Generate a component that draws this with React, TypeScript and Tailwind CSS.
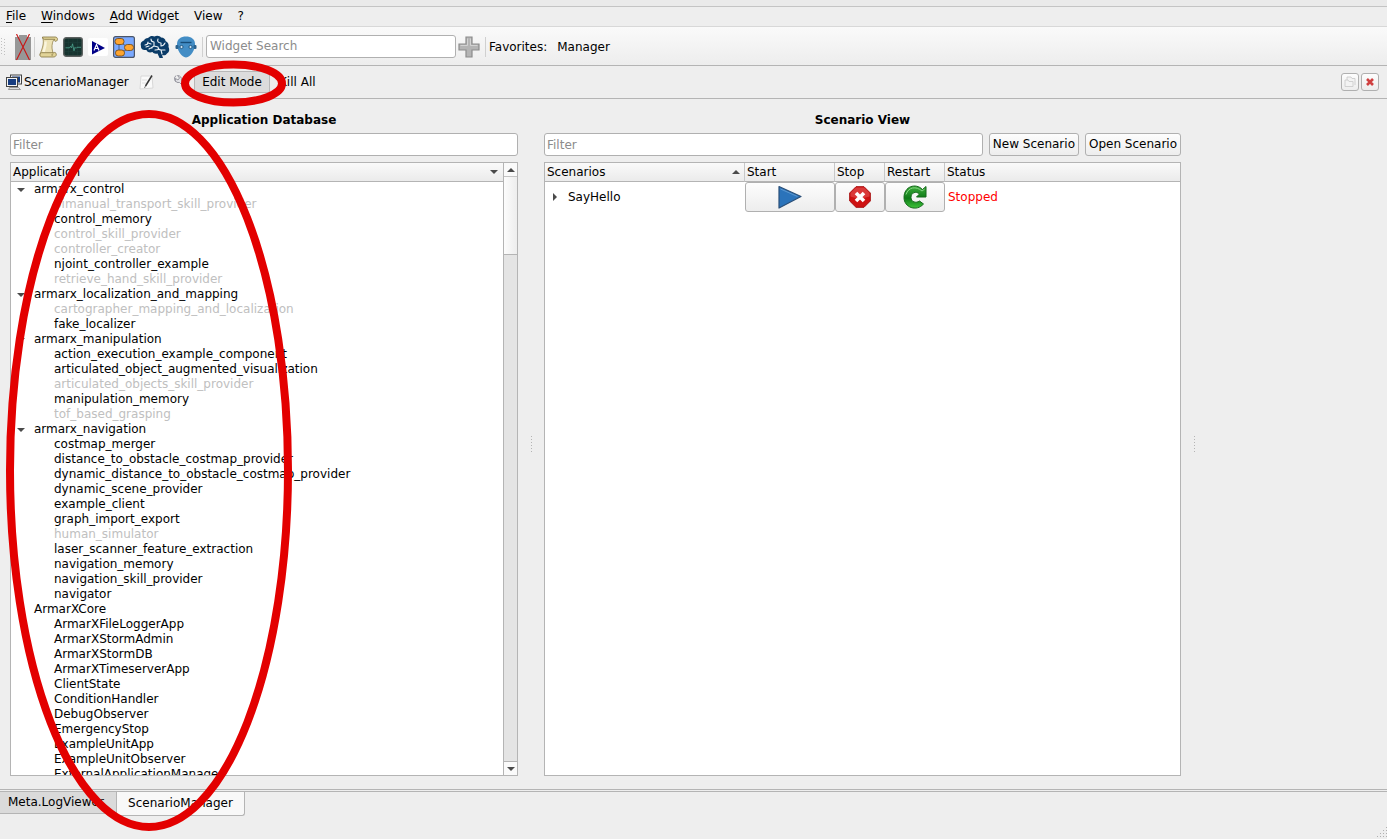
import type { ReactNode } from 'react';

type AppItem = { name: string; disabled?: boolean };
type AppPackage = { name: string; items: AppItem[] };

const packages: AppPackage[] = [
  {
    name: 'armarx_control',
    items: [
      { name: 'bimanual_transport_skill_provider', disabled: true },
      { name: 'control_memory' },
      { name: 'control_skill_provider', disabled: true },
      { name: 'controller_creator', disabled: true },
      { name: 'njoint_controller_example' },
      { name: 'retrieve_hand_skill_provider', disabled: true },
    ],
  },
  {
    name: 'armarx_localization_and_mapping',
    items: [
      { name: 'cartographer_mapping_and_localization', disabled: true },
      { name: 'fake_localizer' },
    ],
  },
  {
    name: 'armarx_manipulation',
    items: [
      { name: 'action_execution_example_component' },
      { name: 'articulated_object_augmented_visualization' },
      { name: 'articulated_objects_skill_provider', disabled: true },
      { name: 'manipulation_memory' },
      { name: 'tof_based_grasping', disabled: true },
    ],
  },
  {
    name: 'armarx_navigation',
    items: [
      { name: 'costmap_merger' },
      { name: 'distance_to_obstacle_costmap_provider' },
      { name: 'dynamic_distance_to_obstacle_costmap_provider' },
      { name: 'dynamic_scene_provider' },
      { name: 'example_client' },
      { name: 'graph_import_export' },
      { name: 'human_simulator', disabled: true },
      { name: 'laser_scanner_feature_extraction' },
      { name: 'navigation_memory' },
      { name: 'navigation_skill_provider' },
      { name: 'navigator' },
    ],
  },
  {
    name: 'ArmarXCore',
    items: [
      { name: 'ArmarXFileLoggerApp' },
      { name: 'ArmarXStormAdmin' },
      { name: 'ArmarXStormDB' },
      { name: 'ArmarXTimeserverApp' },
      { name: 'ClientState' },
      { name: 'ConditionHandler' },
      { name: 'DebugObserver' },
      { name: 'EmergencyStop' },
      { name: 'ExampleUnitApp' },
      { name: 'ExampleUnitObserver' },
      { name: 'ExternalApplicationManager' },
    ],
  },
];

function Arrow({ dir }: { dir: 'up' | 'down' | 'right' }) {
  const points = { up: '0,6 4,2 8,6', down: '0,2 8,2 4,6', right: '2,0 6,4 2,8' };
  return (
    <svg width="8" height="8" viewBox="0 0 8 8" className="shrink-0">
      <polygon points={points[dir]} fill="#4a4a4a" />
    </svg>
  );
}

function Separator() {
  return <span className="w-px h-5 bg-[#d0d0d0] shrink-0" />;
}

// dotted grip between the panes
function SplitHandle() {
  return (
    <div className="flex items-center justify-center">
      <svg width="2" height="18" viewBox="0 0 2 18">
        {[0, 3, 6, 9, 12, 15].map((y) => (
          <rect key={y} x="1" y={y} width="1" height="1" fill="#b4b4b4" />
        ))}
      </svg>
    </div>
  );
}

function ToolButton({ label, className, children }: { label: string; className: string; children: ReactNode }) {
  return (
    <button aria-label={label} className={`flex items-center justify-center shrink-0 ${className}`}>
      {children}
    </button>
  );
}

function DisconnectIcon() {
  return (
    <svg width="16" height="27" viewBox="0 0 16 27">
      <path d="M0 3h4V1h8v2h4v23H0z" fill="#979797" />
      <path d="M1.500 0L14.500 26M14.500 0L1.500 26" stroke="#c81414" strokeWidth="1.100" />
    </svg>
  );
}

function ScrollIcon() {
  return (
    <svg width="20" height="22" viewBox="0 0 20 22">
      <path d="M3.500 1.500C5.500 6 3.500 12 1.500 17c-1 2 0 3.500 1.500 3.500h12L13.500 15c-1-4-.5-7.500.8-10.500L17 2z" fill="#ece1b4" stroke="#94844e" strokeWidth=".8" />
      <path d="M6.500 5.500C7 9 5.500 13 4.500 16" fill="none" stroke="#faf5dd" strokeWidth="2.400" />
      <path d="M3.500 1h12.500c3-.2 3.300 3.800.8 4.300-1.500.2-2-1.300-1-2H5.500C4.500 3.300 3.500 2.500 3.500 1z" fill="#e2d498" stroke="#80713e" strokeWidth=".8" />
      <path d="M2.500 16.700h12c1-.7 2.800 0 2.800 1.600 0 2-1.500 2.700-3 2.700H2.500c-2-.3-2-4 0-4.300z" fill="#e2d498" stroke="#80713e" strokeWidth=".8" />
      <path d="M13.500 20c-1-.8-.5-2.300.8-2.200" fill="none" stroke="#80713e" strokeWidth=".8" />
    </svg>
  );
}

function MonitorIcon() {
  return (
    <svg width="20" height="20" viewBox="0 0 20 20">
      <rect x=".7" y=".7" width="18.600" height="18.600" rx="2.500" fill="#16332f" stroke="#5b605f" strokeWidth="1.400" />
      <path d="M2 5.500h16M2 10h16M2 14.500h16M5.500 2v16M10 2v16M14.500 2v16" stroke="#1f3f3a" strokeWidth=".6" />
      <path d="M2.500 10.800h4l1-1.500 1 1.500 1-4 1.500 7 1-3.500 1 1 1-1h4" fill="none" stroke="#4da38e" strokeWidth=".8" />
    </svg>
  );
}

function PlayAIcon() {
  return (
    <svg width="20" height="18" viewBox="0 0 20 18">
      <rect width="20" height="18" rx="2" fill="#fff" />
      <path d="M4 3l13 7L4 16.500z" fill="#000087" />
      <path d="M6 12.500l2.500-6 2.500 6M7 10.500h3" fill="none" stroke="#fff" strokeWidth="1.200" />
    </svg>
  );
}

function GraphIcon() {
  return (
    <svg width="22" height="22" viewBox="0 0 22 22">
      <rect x=".6" y=".6" width="20.800" height="20.800" rx="2" fill="#7aa9ff" stroke="#4b5568" strokeWidth="1.200" />
      <path d="M6 6v10M7 6l9 6M7 17l8-4" stroke="#47608f" strokeWidth="1" />
      <g fill="#ffa52e" stroke="#704d22" strokeWidth=".9">
        <rect x="2" y="2.500" width="9" height="6" rx="2.800" />
        <rect x="11.500" y="8.500" width="9" height="6" rx="2.800" />
        <rect x="2.500" y="14" width="9" height="6" rx="2.800" />
      </g>
    </svg>
  );
}

function BrainIcon() {
  return (
    <svg width="30" height="24" viewBox="0 0 30 24">
      <path d="M8 3C10 .5 13 .5 14.500 1.500 17 0 20 1 21 2.500c3 0 4.500 2 4.500 3.500 3 1.500 3.500 4 3 6 1.500 3 .5 5.500-1.500 6.500-1 2-3.500 2-5 1.500L23 23h-3.500l-2-4.500c-2.500.5-4 0-5-1.500-3 1-5.500 0-6-2C3 15.500.5 13.500 1 11 0 8 2 6 4 5.500 4.500 4 6 3 8 3z" fill="#0b3c68" />
      <path d="M5 10c2 0 3-1 3-3M8 8l3 1M11 4c0 2 1 3 3 3M14 7v4l-3 2M14 11l4 1M18 4c-1 2 0 4 3 4M21 8v3M25 8c-1 2-2 3-4 3M18 12c0 2 1 3 3 3h4M21 15l1 4M6 12l3-1M9 14c1-1 2-1 3-1M15 15c2 0 3 0 4-1" fill="none" stroke="#edf3f7" strokeWidth="1.100" strokeLinecap="round" />
    </svg>
  );
}

function HeadIcon() {
  return (
    <svg width="22" height="22" viewBox="0 0 22 22">
      <path d="M2 8C2 3 6 .5 11 .5S20 3 20 8c0 6-4 13-9 13.500C6 21 2 14 2 8z" fill="#438dc5" />
      <path d="M5.500 6.500h11" stroke="#174c77" strokeWidth="1.400" />
      <rect x=".5" y="9" width="3" height="4" rx="1" fill="#2b628e" />
      <rect x="18.500" y="9" width="3" height="4" rx="1" fill="#2b628e" />
      <circle cx="6.500" cy="11" r="1.600" fill="#d5e6f3" stroke="#1c527d" strokeWidth=".9" />
      <circle cx="15.500" cy="11" r="1.600" fill="#d5e6f3" stroke="#1c527d" strokeWidth=".9" />
    </svg>
  );
}

function PlusIcon() {
  return (
    <svg width="22" height="22" viewBox="0 0 22 22">
      <path d="M8 1h6v7h7v6h-7v7H8v-7H1V8h7z" fill="#b4b4b4" stroke="#8c8c8c" strokeWidth="1.200" />
      <path d="M9.500 2.500v7h-7M12.500 2.500v7h7" fill="none" stroke="#d2d2d2" strokeWidth="1" />
    </svg>
  );
}

function WindowsIcon() {
  return (
    <svg width="16" height="16" viewBox="0 0 16 16">
      <rect x="4.500" y="1" width="11" height="9" fill="#f4f4f4" stroke="#444" />
      <rect x="6" y="2.500" width="8" height="6" fill="#173d80" />
      <rect x=".5" y="3.500" width="11" height="9" fill="#f4f4f4" stroke="#444" />
      <rect x="2" y="5" width="8" height="6" fill="#173d80" />
      <path d="M2.500 15.500l1-2h9l2 2z" fill="#ddd" stroke="#777" strokeWidth=".7" />
    </svg>
  );
}

function EditPageIcon() {
  return (
    <svg width="16" height="16" viewBox="0 0 16 16">
      <path d="M2 2h11l1 12-13 1z" fill="#fafafa" stroke="#d0d0d0" strokeWidth=".8" />
      <path d="M3 6h5M3 9h4" stroke="#d8d8d8" strokeWidth=".8" />
      <path d="M13 1.500L6.500 12" stroke="#353535" strokeWidth="1.500" />
      <path d="M6.500 12l-1 2" stroke="#777" />
    </svg>
  );
}

function WrenchIcon() {
  return (
    <svg width="16" height="16" viewBox="0 0 16 16">
      <path d="M3 1.500a4 4 0 0 0 3.500 7L13 15l2-2-6.500-6.500a4 4 0 0 0-4-5L6.500 4 5 6 2.500 4.500A4 4 0 0 0 3 8" fill="#e2e2e6" stroke="#8d8d96" strokeWidth=".9" />
    </svg>
  );
}

function StartIcon() {
  return (
    <svg width="24" height="24" viewBox="0 0 24 24">
      <path d="M1 1.500l22 10-22 11.500z" fill="#2b73ba" stroke="#2a4f78" strokeWidth="1.200" strokeLinejoin="round" />
      <path d="M2.500 4l17 7.500" stroke="#5a97d0" strokeWidth="1" />
    </svg>
  );
}

function StopIcon() {
  return (
    <svg width="22" height="22" viewBox="0 0 22 22">
      <path d="M7 .7h8L21.300 7v8L15 21.300H7L.7 15V7z" fill="#ce1212" stroke="#a80f0f" strokeWidth="1" />
      <path d="M7 1.500h8L20.500 7v3.500C14 12.500 8 12.500 1.500 10.500V7z" fill="#e04a4a" opacity=".7" />
      <path d="M7 7l8 8M15 7l-8 8" stroke="#fff" strokeWidth="3.600" />
    </svg>
  );
}

function RestartIcon() {
  return (
    <svg width="24" height="24" viewBox="0 0 24 24">
      <defs>
        <linearGradient id="restart" x1="0" y1="0" x2="0" y2="1">
          <stop offset="0" stopColor="#3fae3c" />
          <stop offset=".55" stopColor="#0d7a17" />
          <stop offset="1" stopColor="#3fc43a" />
        </linearGradient>
      </defs>
      <path d="M19.500 4.500L23 1.500v10.500h-9.500l3-3C13 5.800 8 7.500 8 12.500c0 4.500 5 6 8.500 3.500l4 3C13.500 27 1 22.500 1 12.500 1 1.500 12.500-2.500 19.500 4.500z" fill="url(#restart)" stroke="#14681a" strokeWidth="1" strokeLinejoin="round" />
      <path d="M3 9.500C5.500 2 13 .8 19 6l2.500-1.800" fill="none" stroke="#86d584" strokeWidth="1" />
    </svg>
  );
}

const boxClass = 'rounded-[3px] border border-[#b0b0b0]';
const buttonClass = 'rounded-[3px] border border-[#b0b0b0] bg-gradient-to-b from-[#fdfdfd] to-[#ededed]';
const headClass = 'border-b border-[#b4b4b4] bg-gradient-to-b from-[#fafafa] to-[#ebebeb]';

function MenuBar() {
  return (
    <nav className="flex items-center gap-[15px] h-5 px-[6px] border-b border-[#d8d8d8]">
      <button><u className="underline-offset-2">F</u>ile</button>
      <button><u className="underline-offset-2">W</u>indows</button>
      <button><u className="underline-offset-2">A</u>dd Widget</button>
      <button>View</button>
      <button>?</button>
    </nav>
  );
}

function ToolBar() {
  return (
    <div className="flex items-center h-[39px] border-b border-[#b4b4b4] bg-gradient-to-b from-[#fafafa] to-[#ededed] pt-[2px]">
      <svg width="6" height="18" viewBox="0 0 6 18" className="mr-[6px]">
        {[0, 3, 6, 9, 12, 15].map((y) => (
          <path key={y} d={`M1 ${y}h1v1H1zM4 ${y + 1}h1v1H4z`} fill="#c0c0c0" />
        ))}
      </svg>
      <ToolButton label="Disconnect" className="w-[22px]"><DisconnectIcon /></ToolButton>
      <Separator />
      <ToolButton label="Log" className="w-7"><ScrollIcon /></ToolButton>
      <ToolButton label="System state" className="w-5"><MonitorIcon /></ToolButton>
      <ToolButton label="ArmarX" className="w-[30px]"><PlayAIcon /></ToolButton>
      <ToolButton label="Statecharts" className="w-[22px]"><GraphIcon /></ToolButton>
      <ToolButton label="Memory" className="w-10"><BrainIcon /></ToolButton>
      <ToolButton label="Robot" className="w-[22px] mr-[5px]"><HeadIcon /></ToolButton>
      <Separator />
      <input
        aria-label="Widget Search"
        placeholder="Widget Search"
        className={`${boxClass} bg-white h-[23px] w-[250px] px-[3px] ml-[3px] mb-[2px] placeholder:text-[#8c8c8c]`}
      />
      <ToolButton label="Add widget" className="w-[22px] mx-[2px]"><PlusIcon /></ToolButton>
      <span className="w-[3px]" />
      <Separator />
      <span className="pl-[3px] pr-[10px]">Favorites:</span>
      <button>Manager</button>
    </div>
  );
}

function TitleBar() {
  return (
    <div className="flex items-center h-[33px] border-b border-[#b4b4b4] pl-[6px] pr-2">
      <WindowsIcon />
      <span className="pl-[2px] w-[117px]">ScenarioManager</span>
      <ToolButton label="Edit scenario" className="w-4 mr-[18px]"><EditPageIcon /></ToolButton>
      <ToolButton label="Configure" className="w-4 mr-[5px]"><WrenchIcon /></ToolButton>
      <button className="h-[22px] w-[76px] rounded-[2px] border border-[#b8b8b8] bg-[#dcdcdc]">Edit Mode</button>
      <button className="ml-[9px]">Kill All</button>
      <div className="flex gap-[2px] ml-auto">
        <ToolButton label="Undock" className={`${buttonClass} size-[18px]`}>
          <svg width="12" height="12" viewBox="0 0 12 12" fill="#f3f3f3" stroke="#cdcdcd" strokeWidth=".9">
            <path d="M3 5V1h4l1 1.500h3V9" />
            <path d="M1 10.500V4h3l1 1.500h4v5z" />
          </svg>
        </ToolButton>
        <ToolButton label="Close" className={`${buttonClass} size-[18px]`}>
          <svg width="8" height="8" viewBox="0 0 8 8">
            <path d="M1 1l6 6M7 1L1 7" stroke="#d04040" strokeWidth="2.600" />
          </svg>
        </ToolButton>
      </div>
    </div>
  );
}

function ApplicationTree() {
  return (
    <div className="flex flex-1 min-h-0 border border-[#b4b4b4] bg-white">
      <div className="flex flex-col flex-1 min-w-0">
        <button className={`${headClass} flex items-center justify-between h-[19px] shrink-0 pl-[2px] pr-[5px]`}>
          Application
          <Arrow dir="down" />
        </button>
        <ul className="flex-1 min-h-0 overflow-x-hidden overflow-y-auto [scrollbar-width:none] whitespace-nowrap">
          {packages.map((pkg) => (
            <li key={pkg.name}>
              <div className="flex items-center gap-[9px] pl-[6px]">
                <Arrow dir="down" />
                {pkg.name}
              </div>
              <ul className="pl-[43px]">
                {pkg.items.map((item) => (
                  <li key={item.name} className={item.disabled ? 'text-[#c0c0c0]' : undefined}>
                    {item.name}
                  </li>
                ))}
              </ul>
            </li>
          ))}
        </ul>
      </div>
      <div className="flex flex-col w-[14px] shrink-0 border-l border-[#b4b4b4] bg-[#e4e4e4]">
        <button aria-label="Scroll up" className="flex items-center justify-center h-[14px] border-b border-[#c4c4c4] bg-[#fafafa]">
          <Arrow dir="up" />
        </button>
        <div className="h-[78px] border-b border-[#b4b4b4] bg-gradient-to-r from-[#fcfcfc] to-[#ededed]" />
        <button aria-label="Scroll down" className="flex items-center justify-center h-[14px] mt-auto border-t border-[#b4b4b4] bg-[#fafafa]">
          <Arrow dir="down" />
        </button>
      </div>
    </div>
  );
}

function ScenarioTable() {
  return (
    <div className="flex-1 min-h-0 border border-[#b4b4b4] bg-white overflow-hidden">
      <table className="w-full table-fixed border-separate border-spacing-0">
        <colgroup>
          <col className="w-[200px]" />
          <col className="w-[90px]" />
          <col className="w-[50px]" />
          <col className="w-[60px]" />
          <col />
        </colgroup>
        <thead>
          <tr className="h-[19px] text-left">
            <th className={`${headClass} border-r border-r-[#c8c8c8] font-normal p-0 pl-[2px]`}>
              <div className="flex items-center justify-between pr-1">
                Scenarios
                <Arrow dir="up" />
              </div>
            </th>
            <th className={`${headClass} border-r border-r-[#c8c8c8] font-normal p-0 pl-[2px]`}>Start</th>
            <th className={`${headClass} border-r border-r-[#c8c8c8] font-normal p-0 pl-[2px]`}>Stop</th>
            <th className={`${headClass} border-r border-r-[#c8c8c8] font-normal p-0 pl-[2px]`}>Restart</th>
            <th className={`${headClass} font-normal p-0 pl-[2px]`}>Status</th>
          </tr>
        </thead>
        <tbody>
          <tr>
            <td className="p-0">
              <div className="flex items-center gap-[9px] pl-[6px]">
                <Arrow dir="right" />
                SayHello
              </div>
            </td>
            <td className="p-0">
              <ToolButton label="Start" className={`${buttonClass} w-full h-[30px]`}><StartIcon /></ToolButton>
            </td>
            <td className="p-0">
              <ToolButton label="Stop" className={`${buttonClass} w-full h-[30px]`}><StopIcon /></ToolButton>
            </td>
            <td className="p-0">
              <ToolButton label="Restart" className={`${buttonClass} w-full h-[30px]`}><RestartIcon /></ToolButton>
            </td>
            <td className="p-0 pl-[3px] text-[#ff0000]">Stopped</td>
          </tr>
        </tbody>
      </table>
    </div>
  );
}

export default function App() {
  return (
    <div className="relative flex flex-col h-screen overflow-hidden bg-[#eeeeee] text-black text-[12px] leading-[15px] font-['DejaVu_Sans',sans-serif]">
      <div className="h-[7px] shrink-0 border-b border-[#c4c4c4] bg-[#eaeaea]" />
      <MenuBar />
      <ToolBar />
      <TitleBar />

      <main className="grid grid-cols-[508fr_26px_637fr_26px_180fr] flex-1 min-h-0 pl-[10px] pt-[14px] pb-[13px]">
        <section className="flex flex-col min-h-0">
          <h2 className="text-center font-bold mb-[5px]">Application Database</h2>
          <input
            aria-label="Filter applications"
            placeholder="Filter"
            className={`${boxClass} bg-white h-[23px] shrink-0 px-[2px] mb-[6px] placeholder:text-[#8c8c8c]`}
          />
          <ApplicationTree />
        </section>
        <SplitHandle />
        <section className="flex flex-col min-h-0">
          <h2 className="text-center font-bold mb-[5px]">Scenario View</h2>
          <div className="flex gap-[6px] mb-[6px]">
            <input
              aria-label="Filter scenarios"
              placeholder="Filter"
              className={`${boxClass} bg-white h-[23px] flex-1 min-w-0 px-[2px] placeholder:text-[#8c8c8c]`}
            />
            <button className={`${buttonClass} h-[23px] px-[3px]`}>New Scenario</button>
            <button className={`${buttonClass} h-[23px] px-[3px]`}>Open Scenario</button>
          </div>
          <ScenarioTable />
        </section>
        <SplitHandle />
      </main>

      <footer className="h-[50px] shrink-0 border-t border-[#b4b4b4] pt-px">
        <div className="flex items-start justify-between h-full border-t border-[#b4b4b4]">
          <div className="flex items-start">
            <button className="h-[22px] w-[117px] pl-2 text-left border-b border-r border-[#b4b4b4] bg-[#dadada]">
              Meta.LogViewer
            </button>
            <button className="h-6 w-32 rounded-br-[3px] border-b border-r border-[#b4b4b4] bg-[#f8f8f8]">
              ScenarioManager
            </button>
          </div>
          <svg width="10" height="12" viewBox="0 0 10 12" className="self-end">
            <path d="M9 0h1v1H9zM6 3h1v1H6zM9 3h1v1H9zM3 6h1v1H3zM6 6h1v1H6zM9 6h1v1H9zM0 9h1v1H0zM3 9h1v1H3zM6 9h1v1H6zM9 9h1v1H9z" fill="#b0b0b0" />
          </svg>
        </div>
      </footer>

      {/* hand-drawn markers over the window */}
      <svg width="300" height="839" viewBox="0 0 300 839" className="absolute left-0 top-0 pointer-events-none" fill="none" stroke="#e30000" strokeWidth="8">
        <ellipse cx="233.500" cy="83.500" rx="48.500" ry="19" />
        <ellipse cx="149" cy="470.500" rx="139" ry="356.500" />
      </svg>
    </div>
  );
}
